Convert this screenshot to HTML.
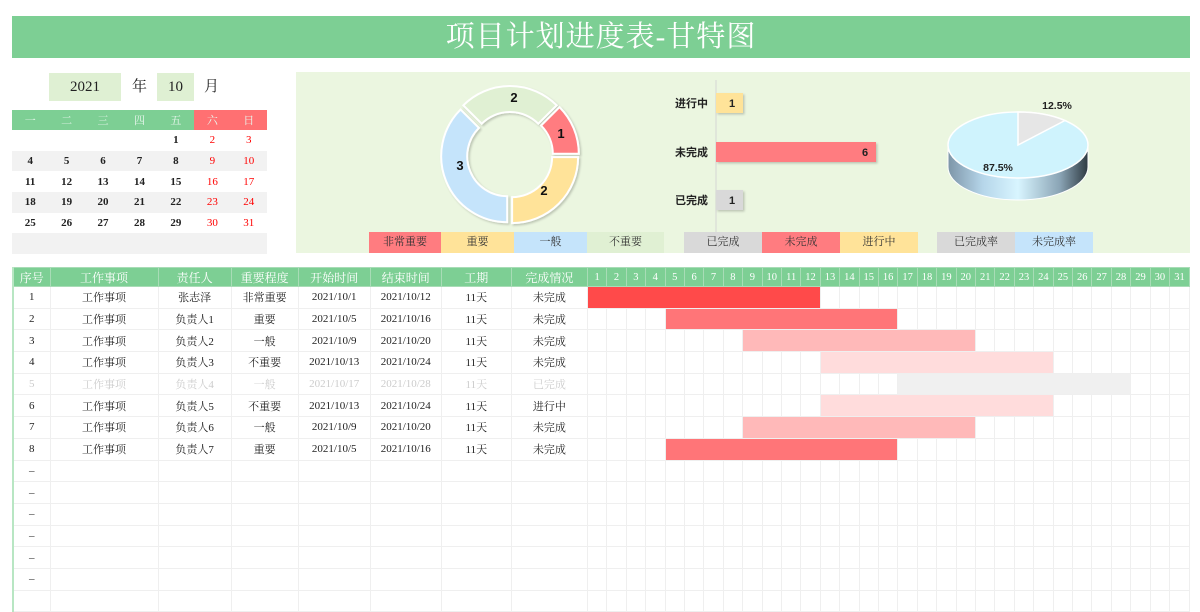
<!DOCTYPE html>
<html><head><meta charset="utf-8">
<style>
*{margin:0;padding:0;box-sizing:border-box}
body{width:1200px;height:600px;overflow:hidden;background:#fff;font-family:"Liberation Serif","Noto Serif CJK SC",serif;color:#222}
.abs{position:absolute}
.title{left:12px;top:16px;width:1178px;height:42px;background:#7dcf94;color:#fff;font-size:29px;text-align:center;line-height:42px;letter-spacing:1px;font-family:"Liberation Serif","Noto Serif CJK SC",serif}
.cal{left:12px;top:110px;width:255px;border-collapse:collapse;table-layout:fixed;font-size:11px;font-weight:bold}
.cal td{height:20.7px;text-align:center;padding:0}
.cal tr.h td{background:#7dcf94;color:#e9f7ee;font-weight:normal;height:20px}
.cal tr.h td.r{background:#ff7072}
.cal tr.g td{background:#f2f2f2}
.cal .red{color:#ff0000;font-weight:normal}
.main{left:12px;top:267px;border-collapse:collapse;table-layout:fixed;font-size:11px;border-left:2px solid #b8e6c3;border-right:1px solid #b8e6c3}
.main td{border:1px solid #efefef;text-align:center;height:21.7px;padding:0;white-space:nowrap;overflow:hidden}
.main tr.h td{background:#7dcf94;color:#fff;height:19px;border:1px solid #a8dcb6;font-size:12px}
.main tr.h td.d{font-size:10.5px}
.main tr.f td{color:#ccc}
.b1{background:#ff4a4a}.b2{background:#ff7578}.b3{background:#ffb9b9}.b4{background:#ffdcdc}.b5{background:#f0f0f0}
.lg{height:21px;top:232px;font-size:11px;text-align:center;line-height:21px;color:#333}
</style></head><body>
<div class="abs title">项目计划进度表-甘特图</div>

<div class="abs" style="left:49px;top:73px;width:72px;height:28px;background:#dff0d3;text-align:center;line-height:28px;font-size:15px">2021</div>
<div class="abs" style="left:132px;top:73px;height:28px;line-height:28px;font-size:15px">年</div>
<div class="abs" style="left:157px;top:73px;width:37px;height:28px;background:#dff0d3;text-align:center;line-height:28px;font-size:15px">10</div>
<div class="abs" style="left:204px;top:73px;height:28px;line-height:28px;font-size:15px">月</div>

<table class="abs cal">
<tr class="h"><td>一</td><td>二</td><td>三</td><td>四</td><td>五</td><td class="r">六</td><td class="r">日</td></tr>
<tr><td></td><td></td><td></td><td></td><td>1</td><td class="red">2</td><td class="red">3</td></tr>
<tr class="g"><td>4</td><td>5</td><td>6</td><td>7</td><td>8</td><td class="red">9</td><td class="red">10</td></tr>
<tr><td>11</td><td>12</td><td>13</td><td>14</td><td>15</td><td class="red">16</td><td class="red">17</td></tr>
<tr class="g"><td>18</td><td>19</td><td>20</td><td>21</td><td>22</td><td class="red">23</td><td class="red">24</td></tr>
<tr><td>25</td><td>26</td><td>27</td><td>28</td><td>29</td><td class="red">30</td><td class="red">31</td></tr>
<tr class="g"><td></td><td></td><td></td><td></td><td></td><td></td><td></td></tr>
</table>

<div class="abs" style="left:296px;top:72px;width:894px;height:181px;background:#ebf6e0"></div>
<svg class="abs" style="left:0;top:0" width="1200" height="260">
<defs>
<linearGradient id="side" x1="0" x2="1" y1="0" y2="0">
<stop offset="0" stop-color="#7d95a8"/><stop offset="0.25" stop-color="#b6d6ea"/><stop offset="0.5" stop-color="#d8f5ff"/><stop offset="0.8" stop-color="#8aa4b5"/><stop offset="1" stop-color="#2e3a42"/>
</linearGradient>
<filter id="sh"><feDropShadow dx="1.5" dy="1.5" stdDeviation="1" flood-color="#000" flood-opacity="0.2"/></filter>
</defs>
<g stroke="#fff" stroke-width="2" filter="url(#sh)">
<path transform="translate(2.8,-1.2)" d="M556.67,108.33 A66,66 0 0 1 576,155 L550,155 A40,40 0 0 0 538.28,126.72 Z" fill="#ff7c80"/>
<path transform="translate(2.1,2.1)" d="M576,155 A66,66 0 0 1 510,221 L510,195 A40,40 0 0 0 550,155 Z" fill="#ffe399"/>
<path transform="translate(-2.8,1.2)" d="M510,221 A66,66 0 0 1 463.33,108.33 L481.72,126.72 A40,40 0 0 0 510,195 Z" fill="#c5e4fb"/>
<path transform="translate(0,-3)" d="M463.33,108.33 A66,66 0 0 1 556.67,108.33 L538.28,126.72 A40,40 0 0 0 481.72,126.72 Z" fill="#e0f0d3"/>
</g>
<g font-family="Liberation Sans, Noto Sans CJK SC, sans-serif" font-weight="bold" font-size="13" text-anchor="middle" fill="#111">
<text x="561" y="138">1</text><text x="544" y="195">2</text><text x="460" y="170">3</text><text x="514" y="102">2</text>
</g>
<line x1="716" y1="80" x2="716" y2="251" stroke="#d5d5d5"/>
<g filter="url(#sh)">
<rect x="716" y="93" width="27" height="20" fill="#ffe399"/>
<rect x="716" y="142" width="160" height="20" fill="#ff7c80"/>
<rect x="716" y="190" width="27" height="20" fill="#d9d9d9"/>
</g>
<g font-family="Liberation Sans, Noto Sans CJK SC, sans-serif" font-weight="bold" font-size="11" fill="#222">
<text x="708" y="107" text-anchor="end">进行中</text><text x="708" y="156" text-anchor="end">未完成</text><text x="708" y="204" text-anchor="end">已完成</text>
<text x="732" y="107" text-anchor="middle">1</text><text x="865" y="156" text-anchor="middle">6</text><text x="732" y="204" text-anchor="middle">1</text>
</g>
<path d="M948,145 A70,33 0 0 0 1088,145 L1088,167 A70,33 0 0 1 948,167 Z" fill="url(#side)" stroke="#fff" stroke-width="1"/>
<ellipse cx="1018" cy="145" rx="70" ry="33" fill="#cff3fd" stroke="#fff" stroke-width="1.5"/>
<path d="M1018,145 L1018,112 A70,33 0 0 1 1065,120.5 Z" fill="#e6e6e6" stroke="#fff" stroke-width="1.5"/>
<g font-family="Liberation Sans, Noto Sans CJK SC, sans-serif" font-weight="bold" font-size="10.5" fill="#222" text-anchor="middle">
<text x="1057" y="109">12.5%</text><text x="998" y="171">87.5%</text>
</g>
</svg>
<div class="abs lg" style="left:369px;width:72px;background:#ff7c80">非常重要</div>
<div class="abs lg" style="left:441px;width:73px;background:#ffe399">重要</div>
<div class="abs lg" style="left:514px;width:73px;background:#c5e4fb">一般</div>
<div class="abs lg" style="left:587px;width:77px;background:#e0f0d3">不重要</div>
<div class="abs lg" style="left:684px;width:78px;background:#d9d9d9">已完成</div>
<div class="abs lg" style="left:762px;width:78px;background:#ff7c80">未完成</div>
<div class="abs lg" style="left:840px;width:78px;background:#ffe399">进行中</div>
<div class="abs lg" style="left:937px;width:78px;background:#d9d9d9">已完成率</div>
<div class="abs lg" style="left:1015px;width:78px;background:#c5e4fb">未完成率</div>

<table class="abs main" style="width:1178px">
<colgroup><col style="width:37px"><col style="width:108px"><col style="width:73px"><col style="width:67px"><col style="width:72px"><col style="width:71px"><col style="width:70px"><col style="width:76px">
<col span="31" style="width:19.42px"></colgroup>
<tr class="h"><td>序号</td><td>工作事项</td><td>责任人</td><td>重要程度</td><td>开始时间</td><td>结束时间</td><td>工期</td><td>完成情况</td><td class="d">1</td><td class="d">2</td><td class="d">3</td><td class="d">4</td><td class="d">5</td><td class="d">6</td><td class="d">7</td><td class="d">8</td><td class="d">9</td><td class="d">10</td><td class="d">11</td><td class="d">12</td><td class="d">13</td><td class="d">14</td><td class="d">15</td><td class="d">16</td><td class="d">17</td><td class="d">18</td><td class="d">19</td><td class="d">20</td><td class="d">21</td><td class="d">22</td><td class="d">23</td><td class="d">24</td><td class="d">25</td><td class="d">26</td><td class="d">27</td><td class="d">28</td><td class="d">29</td><td class="d">30</td><td class="d">31</td></tr>
<tr><td>1</td><td>工作事项</td><td>张志泽</td><td>非常重要</td><td>2021/10/1</td><td>2021/10/12</td><td>11天</td><td>未完成</td><td colspan="12" class="b1"></td><td></td><td></td><td></td><td></td><td></td><td></td><td></td><td></td><td></td><td></td><td></td><td></td><td></td><td></td><td></td><td></td><td></td><td></td><td></td></tr>
<tr><td>2</td><td>工作事项</td><td>负责人1</td><td>重要</td><td>2021/10/5</td><td>2021/10/16</td><td>11天</td><td>未完成</td><td></td><td></td><td></td><td></td><td colspan="12" class="b2"></td><td></td><td></td><td></td><td></td><td></td><td></td><td></td><td></td><td></td><td></td><td></td><td></td><td></td><td></td><td></td></tr>
<tr><td>3</td><td>工作事项</td><td>负责人2</td><td>一般</td><td>2021/10/9</td><td>2021/10/20</td><td>11天</td><td>未完成</td><td></td><td></td><td></td><td></td><td></td><td></td><td></td><td></td><td colspan="12" class="b3"></td><td></td><td></td><td></td><td></td><td></td><td></td><td></td><td></td><td></td><td></td><td></td></tr>
<tr><td>4</td><td>工作事项</td><td>负责人3</td><td>不重要</td><td>2021/10/13</td><td>2021/10/24</td><td>11天</td><td>未完成</td><td></td><td></td><td></td><td></td><td></td><td></td><td></td><td></td><td></td><td></td><td></td><td></td><td colspan="12" class="b4"></td><td></td><td></td><td></td><td></td><td></td><td></td><td></td></tr>
<tr class="f"><td>5</td><td>工作事项</td><td>负责人4</td><td>一般</td><td>2021/10/17</td><td>2021/10/28</td><td>11天</td><td>已完成</td><td></td><td></td><td></td><td></td><td></td><td></td><td></td><td></td><td></td><td></td><td></td><td></td><td></td><td></td><td></td><td></td><td colspan="12" class="b5"></td><td></td><td></td><td></td></tr>
<tr><td>6</td><td>工作事项</td><td>负责人5</td><td>不重要</td><td>2021/10/13</td><td>2021/10/24</td><td>11天</td><td>进行中</td><td></td><td></td><td></td><td></td><td></td><td></td><td></td><td></td><td></td><td></td><td></td><td></td><td colspan="12" class="b4"></td><td></td><td></td><td></td><td></td><td></td><td></td><td></td></tr>
<tr><td>7</td><td>工作事项</td><td>负责人6</td><td>一般</td><td>2021/10/9</td><td>2021/10/20</td><td>11天</td><td>未完成</td><td></td><td></td><td></td><td></td><td></td><td></td><td></td><td></td><td colspan="12" class="b3"></td><td></td><td></td><td></td><td></td><td></td><td></td><td></td><td></td><td></td><td></td><td></td></tr>
<tr><td>8</td><td>工作事项</td><td>负责人7</td><td>重要</td><td>2021/10/5</td><td>2021/10/16</td><td>11天</td><td>未完成</td><td></td><td></td><td></td><td></td><td colspan="12" class="b2"></td><td></td><td></td><td></td><td></td><td></td><td></td><td></td><td></td><td></td><td></td><td></td><td></td><td></td><td></td><td></td></tr>
<tr><td>–</td><td></td><td></td><td></td><td></td><td></td><td></td><td></td><td></td><td></td><td></td><td></td><td></td><td></td><td></td><td></td><td></td><td></td><td></td><td></td><td></td><td></td><td></td><td></td><td></td><td></td><td></td><td></td><td></td><td></td><td></td><td></td><td></td><td></td><td></td><td></td><td></td><td></td><td></td></tr>
<tr><td>–</td><td></td><td></td><td></td><td></td><td></td><td></td><td></td><td></td><td></td><td></td><td></td><td></td><td></td><td></td><td></td><td></td><td></td><td></td><td></td><td></td><td></td><td></td><td></td><td></td><td></td><td></td><td></td><td></td><td></td><td></td><td></td><td></td><td></td><td></td><td></td><td></td><td></td><td></td></tr>
<tr><td>–</td><td></td><td></td><td></td><td></td><td></td><td></td><td></td><td></td><td></td><td></td><td></td><td></td><td></td><td></td><td></td><td></td><td></td><td></td><td></td><td></td><td></td><td></td><td></td><td></td><td></td><td></td><td></td><td></td><td></td><td></td><td></td><td></td><td></td><td></td><td></td><td></td><td></td><td></td></tr>
<tr><td>–</td><td></td><td></td><td></td><td></td><td></td><td></td><td></td><td></td><td></td><td></td><td></td><td></td><td></td><td></td><td></td><td></td><td></td><td></td><td></td><td></td><td></td><td></td><td></td><td></td><td></td><td></td><td></td><td></td><td></td><td></td><td></td><td></td><td></td><td></td><td></td><td></td><td></td><td></td></tr>
<tr><td>–</td><td></td><td></td><td></td><td></td><td></td><td></td><td></td><td></td><td></td><td></td><td></td><td></td><td></td><td></td><td></td><td></td><td></td><td></td><td></td><td></td><td></td><td></td><td></td><td></td><td></td><td></td><td></td><td></td><td></td><td></td><td></td><td></td><td></td><td></td><td></td><td></td><td></td><td></td></tr>
<tr><td>–</td><td></td><td></td><td></td><td></td><td></td><td></td><td></td><td></td><td></td><td></td><td></td><td></td><td></td><td></td><td></td><td></td><td></td><td></td><td></td><td></td><td></td><td></td><td></td><td></td><td></td><td></td><td></td><td></td><td></td><td></td><td></td><td></td><td></td><td></td><td></td><td></td><td></td><td></td></tr>
<tr><td></td><td></td><td></td><td></td><td></td><td></td><td></td><td></td><td></td><td></td><td></td><td></td><td></td><td></td><td></td><td></td><td></td><td></td><td></td><td></td><td></td><td></td><td></td><td></td><td></td><td></td><td></td><td></td><td></td><td></td><td></td><td></td><td></td><td></td><td></td><td></td><td></td><td></td><td></td></tr>
</table>
</body></html>
